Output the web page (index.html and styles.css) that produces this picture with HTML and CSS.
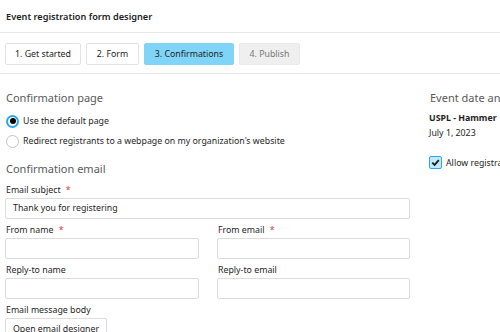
FILE: index.html
```html
<!DOCTYPE html>
<html lang="en">
<head>
    <meta charset="UTF-8">
    <meta name="viewport" content="width=device-width, initial-scale=1.0">
    <title>Event registration form designer</title>
    <link rel="stylesheet" href="styles.css">
</head>
<body>
    <div class="page-header">
        <h1>Event registration form designer</h1>
    </div>

    <div class="steps">
        <button class="step">1. Get started</button>
        <button class="step">2. Form</button>
        <button class="step active">3. Confirmations</button>
        <button class="step disabled">4. Publish</button>
    </div>

    <div class="content">
        <div class="main-col">
            <h2>Confirmation page</h2>
            <label class="radio-row">
                <span class="radio checked"></span>
                Use the default page
            </label>
            <label class="radio-row">
                <span class="radio"></span>
                Redirect registrants to a webpage on my organization's website
            </label>

            <h2 class="section-gap">Confirmation email</h2>
            <div class="form-group">
                <label>Email subject <span class="req">*</span></label>
                <div class="input">Thank you for registering</div>
            </div>
            <div class="form-row">
                <div class="form-group">
                    <label>From name <span class="req">*</span></label>
                    <div class="input"></div>
                </div>
                <div class="form-group">
                    <label>From email <span class="req">*</span></label>
                    <div class="input"></div>
                </div>
            </div>
            <div class="form-row">
                <div class="form-group">
                    <label>Reply-to name</label>
                    <div class="input"></div>
                </div>
                <div class="form-group">
                    <label>Reply-to email</label>
                    <div class="input"></div>
                </div>
            </div>
            <div class="form-group">
                <label>Email message body</label>
                <button class="plain-btn">Open email designer</button>
            </div>
        </div>

        <div class="side-col">
            <h2>Event date and time</h2>
            <div class="event-name">USPL - Hammer</div>
            <div class="event-date">July 1, 2023</div>
            <label class="check-row">
                <span class="checkbox">
                    <svg width="9" height="9" viewBox="0 0 10 10"><path d="M1.4 5.2 L4 7.7 L8.7 2.3" fill="none" stroke="#1b1b1b" stroke-width="2"/></svg>
                </span>
                Allow registrations after the event starts
            </label>
        </div>
    </div>
</body>
</html>
```

FILE: styles.css
```css
/* General Body Styles */
body {
    font-family: 'Noto Sans', 'Open Sans', sans-serif;
    font-size: 8.8px;
    color: #1e1e1e;
    background-color: #ffffff;
    margin: 0;
    padding: 0;
    width: 500px;
    height: 332px;
    overflow: hidden;
}

/* Header */
.page-header {
    height: 32px;
    border-bottom: 1px solid #e8e8e8;
    display: flex;
    align-items: center;
    padding-left: 6px;
}

.page-header h1 {
    margin: 0;
    font-size: 9.2px;
    font-weight: 600;
    color: #1e1e1e;
}

/* Step buttons */
.steps {
    display: flex;
    gap: 5px;
    padding: 10px 5px 8px;
    border-bottom: 1px solid #e8e8e8;
}

.step {
    font-family: inherit;
    font-size: 8.8px;
    color: #1e1e1e;
    background-color: #fff;
    border: 1px solid #e3e3e3;
    border-radius: 2px;
    height: 22px;
    padding: 0;
}

.step:nth-child(1) { width: 76px; }
.step:nth-child(2) { width: 53px; }
.step:nth-child(3) { width: 90px; }
.step:nth-child(4) { width: 61px; }

.step.active {
    background-color: #80d4f8;
    border-color: #80d4f8;
}

.step.disabled {
    background-color: #efefef;
    border-color: #e9e9e9;
    color: #777;
}

/* Content columns */
.content {
    display: grid;
    grid-template-columns: 405px 200px;
    column-gap: 19px;
    padding: 16px 5px 0;
}

h2 {
    margin: 0 0 5px 1px;
    height: 16px;
    line-height: 16px;
    font-size: 11px;
    font-weight: 400;
    color: #5a5a5a;
}

.section-gap {
    margin-top: 10px;
}

/* Radios */
.radio-row {
    display: flex;
    align-items: center;
    gap: 4px;
    height: 20px;
}

.radio {
    width: 13px;
    height: 13px;
    border: 1px solid #c4c4c4;
    border-radius: 50%;
    box-sizing: border-box;
    display: flex;
    align-items: center;
    justify-content: center;
    margin-left: 1px;
}

.radio.checked {
    border: 2px solid #27a9ec;
}

.radio.checked::after {
    content: "";
    width: 6px;
    height: 6px;
    border-radius: 50%;
    background-color: #000;
}

/* Form fields */
.form-group {
    display: flex;
    flex-direction: column;
    margin-bottom: 3px;
}

.form-group label {
    height: 16px;
    line-height: 16px;
    padding-left: 1px;
}

.req {
    color: #e0393e;
    margin-left: 3px;
}

.form-row {
    display: grid;
    grid-template-columns: 194px 193px;
    column-gap: 18px;
}

.input {
    height: 21px;
    border: 1px solid #dcdcdc;
    border-radius: 2px;
    box-sizing: border-box;
    padding-left: 7px;
    line-height: 19px;
}

.plain-btn {
    font-family: inherit;
    font-size: 8.8px;
    color: #1e1e1e;
    background-color: #fff;
    border: 1px solid #dcdcdc;
    border-radius: 2px;
    height: 22px;
    width: 102px;
    padding: 0;
}

/* Side column */
.side-col h2 {
    white-space: nowrap;
}

.event-name {
    font-weight: 700;
    margin-top: 5px;
    line-height: 15px;
}

.event-date {
    line-height: 15px;
}

.check-row {
    display: flex;
    align-items: center;
    gap: 4px;
    margin-top: 15px;
    white-space: nowrap;
}

.checkbox {
    width: 13px;
    height: 13px;
    box-sizing: border-box;
    border: 1px solid #27a9ec;
    background-color: #c4e8f9;
    border-radius: 2px;
    display: flex;
    align-items: center;
    justify-content: center;
}
```
